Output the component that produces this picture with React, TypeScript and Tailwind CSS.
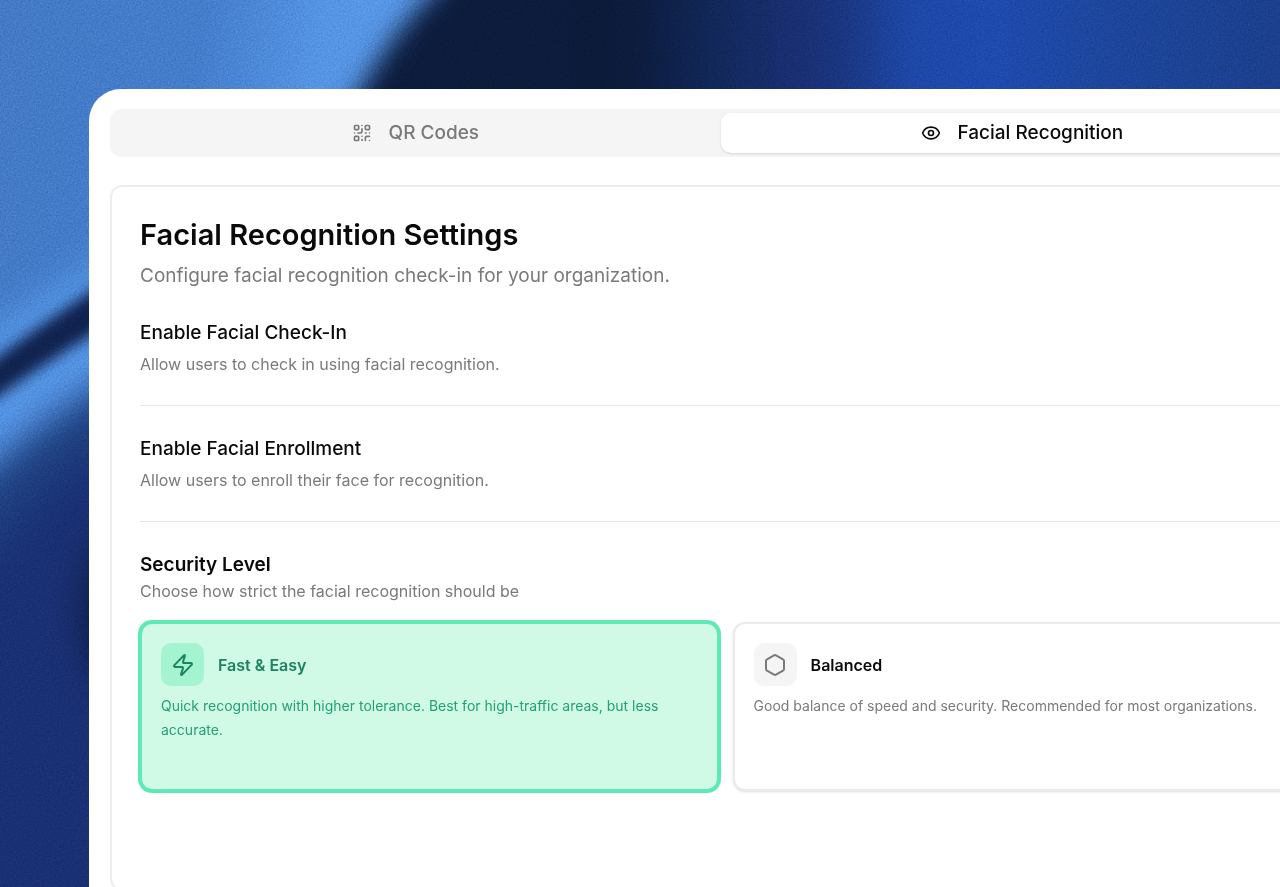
import { useState, type ReactNode } from 'react';
import { Eye, Hexagon, QrCode, Zap, type LucideIcon } from 'lucide-react';

type Tab = 'qr' | 'face';
type Level = 'fast' | 'balanced';

const TABS: { value: Tab; label: string; icon: LucideIcon }[] = [
  { value: 'qr', label: 'QR Codes', icon: QrCode },
  { value: 'face', label: 'Facial Recognition', icon: Eye },
];

const LEVELS: { value: Level; label: string; description: string; icon: LucideIcon }[] = [
  {
    value: 'fast',
    label: 'Fast & Easy',
    description: 'Quick recognition with higher tolerance. Best for high-traffic areas, but less accurate.',
    icon: Zap,
  },
  {
    value: 'balanced',
    label: 'Balanced',
    description: 'Good balance of speed and security. Recommended for most organizations.',
    icon: Hexagon,
  },
];

/** Blue abstract wallpaper behind the panel */
function Wallpaper() {
  return (
    <svg
      aria-hidden="true"
      viewBox="0 0 1280 887"
      preserveAspectRatio="xMinYMin slice"
      className="absolute inset-0 h-full w-full"
    >
      <defs>
        <linearGradient id="sky" gradientUnits="userSpaceOnUse" x1="0" y1="0" x2="400" y2="60">
          <stop offset="0" stopColor="#447ac6" />
          <stop offset="0.5" stopColor="#447dcb" />
          <stop offset="0.8" stopColor="#5594e4" />
          <stop offset="1" stopColor="#5898e8" />
        </linearGradient>
        <linearGradient id="night" gradientUnits="userSpaceOnUse" x1="400" y1="0" x2="1280" y2="0">
          <stop offset="0" stopColor="#0c1b3c" />
          <stop offset="0.26" stopColor="#0c1a3a" />
          <stop offset="0.36" stopColor="#11285a" />
          <stop offset="0.46" stopColor="#1a2f74" />
          <stop offset="0.51" stopColor="#193782" />
          <stop offset="0.58" stopColor="#1e48a8" />
          <stop offset="0.68" stopColor="#1e4aae" />
          <stop offset="0.8" stopColor="#1d469c" />
          <stop offset="1" stopColor="#1b3f8c" />
        </linearGradient>
        <filter id="soft" x="-50%" y="-20%" width="200%" height="140%" colorInterpolationFilters="sRGB">
          <feGaussianBlur stdDeviation="18" />
        </filter>
        <filter id="edge" x="-20%" y="-50%" width="140%" height="200%" colorInterpolationFilters="sRGB">
          <feGaussianBlur stdDeviation="13" />
        </filter>
        <filter id="crease" x="-20%" y="-20%" width="140%" height="140%" colorInterpolationFilters="sRGB">
          <feGaussianBlur stdDeviation="7" />
        </filter>
        <filter id="grain" x="0" y="0" width="100%" height="100%" colorInterpolationFilters="sRGB">
          <feTurbulence type="fractalNoise" baseFrequency="0.6" numOctaves="2" />
          <feColorMatrix values="0.6 0.2 0.2 0 0  0.6 0.2 0.2 0 0  0.6 0.2 0.2 0 0  0 0 0 0 1" />
        </filter>
      </defs>
      <rect width="1280" height="887" fill="url(#sky)" />
      <path d="M290 200 L362 88 Q388 40 426 0 L500 -80 L1400 -80 L1400 200 Z" fill="url(#night)" filter="url(#edge)" />
      <path d="M-80 370 L0 325 L180 210 L180 960 L-80 960 Z" fill="#5596e6" filter="url(#soft)" />
      <path d="M-80 520 L0 460 Q50 411 160 351 L160 960 L-80 960 Z" fill="#1f4080" filter="url(#soft)" />
      <path d="M-80 620 L0 540 Q50 470 160 410 L160 960 L-80 960 Z" fill="#1a3074" filter="url(#soft)" />
      <ellipse cx="118" cy="610" rx="34" ry="75" fill="#0c1c40" filter="url(#soft)" />
      <path d="M-40 386 Q30 330 150 252 L150 302 Q60 350 -40 424 Z" fill="#10224e" filter="url(#crease)" />
      <rect width="1280" height="887" filter="url(#grain)" className="opacity-30 mix-blend-overlay" />
    </svg>
  );
}

function SettingRow({ title, children }: { title: string; children: ReactNode }) {
  return (
    <div className="border-b border-neutral-200 pb-[27px]">
      <h2 className="text-[19px] leading-[30px] font-medium text-neutral-950">{title}</h2>
      <p className="mt-0.5 text-base leading-7 text-[#7a7a7a]">{children}</p>
    </div>
  );
}

export default function App() {
  const [tab, setTab] = useState<Tab>('face');
  const [level, setLevel] = useState<Level>('fast');

  return (
    <div className="relative h-screen overflow-hidden bg-[#1a3074] pt-[89px] pl-[89px] font-['Inter','Liberation_Sans',sans-serif]">
      <Wallpaper />
      {/* the panel runs past the right edge of the window */}
      <main className="relative w-[146vw] rounded-tl-[32px] bg-white pt-5 pr-6 pb-10 pl-[21px]">
        <div role="tablist" className="grid grid-cols-3 gap-1 rounded-xl bg-neutral-100 p-1">
          {TABS.map(({ value, label, icon: Icon }) => (
            <button
              key={value}
              type="button"
              role="tab"
              aria-selected={value === tab}
              onClick={() => setTab(value)}
              className={`flex h-10 items-center justify-center gap-[17px] rounded-[10px] text-[19px] font-medium ${
                value === tab ? 'bg-white text-neutral-950 shadow-sm' : 'text-[#7a7a7a]'
              }`}
            >
              <Icon className="size-5" />
              {label}
            </button>
          ))}
        </div>

        <section className="mt-7 rounded-xl border-2 border-[#ededed] px-7 pt-[30px] pb-[98px]">
          <h1 className="text-[29px] leading-9 font-semibold text-neutral-950">Facial Recognition Settings</h1>
          <p className="mt-2 text-[19px] leading-[30px] text-[#7a7a7a]">
            Configure facial recognition check-in for your organization.
          </p>

          <div className="mt-[27px] flex flex-col gap-7">
            <SettingRow title="Enable Facial Check-In">Allow users to check in using facial recognition.</SettingRow>
            <SettingRow title="Enable Facial Enrollment">Allow users to enroll their face for recognition.</SettingRow>

            <fieldset>
              <legend className="text-[19px] leading-[30px] font-semibold text-neutral-950">Security Level</legend>
              <p className="text-base leading-[22px] text-[#7a7a7a]">
                Choose how strict the facial recognition should be
              </p>
              <div className="mt-5 grid grid-cols-3 gap-[14px]">
                {LEVELS.map(({ value, label, description, icon: Icon }) => {
                  const active = value === level;
                  return (
                    <label
                      key={value}
                      className={`min-h-[169px] rounded-xl border-2 p-[19px] ${
                        active
                          ? 'border-emerald-300 bg-emerald-100 ring-2 ring-emerald-300'
                          : 'border-[#ebebeb] bg-white shadow-sm'
                      }`}
                    >
                      <input
                        type="radio"
                        name="level"
                        value={value}
                        checked={active}
                        onChange={() => setLevel(value)}
                        className="sr-only"
                      />
                      <span className="flex items-center gap-[14px]">
                        <span
                          className={`flex size-[43px] items-center justify-center rounded-[10px] ${
                            active ? 'bg-emerald-200 text-[#1c8262]' : 'bg-neutral-100 text-[#7a7a7a]'
                          }`}
                        >
                          <Icon className="size-6" />
                        </span>
                        <span className={`text-base font-semibold ${active ? 'text-[#1c8262]' : 'text-neutral-950'}`}>
                          {label}
                        </span>
                      </span>
                      <span className={`mt-2 block text-sm leading-6 ${active ? 'text-[#24a077]' : 'text-[#7a7a7a]'}`}>
                        {description}
                      </span>
                    </label>
                  );
                })}
              </div>
            </fieldset>
          </div>
        </section>
      </main>
    </div>
  );
}
